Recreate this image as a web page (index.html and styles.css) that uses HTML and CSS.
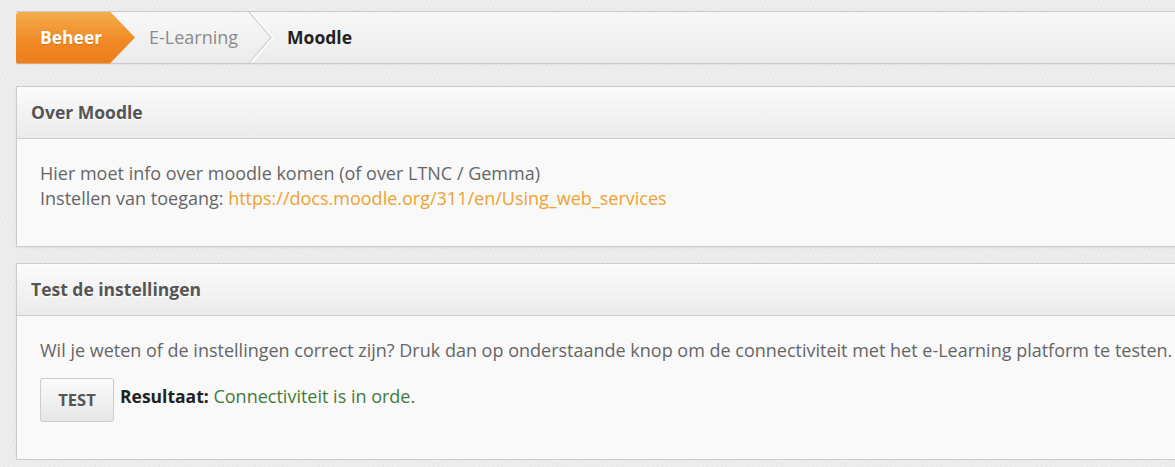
FILE: index.html
```html
<!DOCTYPE html>
<html lang="nl">
<head>
<meta charset="utf-8">
<title>Moodle</title>
<link rel="stylesheet" href="styles.css">
</head>
<body>
<div class="page">
  <nav class="crumbs">
    <a class="crumb crumb-home" href="#">Beheer</a>
    <a class="crumb crumb-mid" href="#">E-Learning</a>
    <svg class="sep" width="26" height="51" viewBox="0 0 26 51" aria-hidden="true">
      <polyline points="2,0 24,25.5 2,51" fill="none" stroke="#fdfdfd" stroke-width="3"/>
      <polyline points="1,0 23,25.5 1,51" fill="none" stroke="#cfcfcf" stroke-width="1.2"/>
    </svg>
    <span class="crumb crumb-current">Moodle</span>
  </nav>

  <section class="panel">
    <header class="panel-head"><h2>Over Moodle</h2></header>
    <div class="panel-body">
      <p>Hier moet info over moodle komen (of over LTNC / Gemma)<br>
      Instellen van toegang: <a class="link" href="#">https://docs.moodle.org/311/en/Using_web_services</a></p>
    </div>
  </section>

  <section class="panel">
    <header class="panel-head"><h2>Test de instellingen</h2></header>
    <div class="panel-body">
      <p>Wil je weten of de instellingen correct zijn? Druk dan op onderstaande knop om de connectiviteit met het e-Learning platform te testen.</p>
      <div class="test-row">
        <button class="btn" type="button">Test</button>
        <span class="result"><b>Resultaat:</b> <span class="ok">Connectiviteit is in orde.</span></span>
      </div>
    </div>
  </section>
</div>
</body>
</html>
```

FILE: styles.css
```css
html, body {
  margin: 0;
  padding: 0;
  overflow: hidden;
}
body {
  background-color: #ececec;
  background-image:
    repeating-linear-gradient(37deg, rgba(255,255,255,0.18) 0 1px, transparent 1px 3px),
    repeating-linear-gradient(-61deg, rgba(0,0,0,0.015) 0 1px, transparent 1px 4px);
  font-family: "Open Sans", "Liberation Sans", sans-serif;
  font-size: 18px;
  line-height: 25px;
  color: #666;
}
.page {
  padding: 11px 0 0 16px;
  width: 1200px;
}
.crumbs {
  display: flex;
  align-items: center;
  height: 51px;
  border-top: 1px solid #c9c9c9;
  border-bottom: 1px solid #c9c9c9;
  background: linear-gradient(#f8f8f8, #ebebeb);
  box-shadow: 0 1px 1px rgba(0,0,0,0.04);
}
.crumb {
  text-decoration: none;
  white-space: nowrap;
  line-height: 24px;
}
.crumb-home {
  box-sizing: border-box;
  width: 119px;
  height: 52px;
  margin-top: -1px;
  margin-bottom: -1px;
  padding-left: 24px;
  padding-bottom: 2px;
  display: flex;
  align-items: center;
  color: #fff;
  font-size: 17.5px;
  font-weight: bold;
  text-shadow: 0 1px 1px rgba(160,80,0,0.35);
  background: linear-gradient(#f6ac4d, #ef8a26 55%, #ee7d1b);
  border-radius: 3px 0 0 3px;
  clip-path: polygon(0 0, 94px 0, 119px 50%, 94px 100%, 0 100%);
}
.crumb-mid {
  margin-left: 14px;
  margin-bottom: 2px;
  color: #8a8a8a;
}
.sep {
  display: block;
  margin-left: 10px;
}
.crumb-current {
  margin-left: 13px;
  margin-bottom: 2px;
  color: #222;
  font-size: 17.5px;
  font-weight: bold;
}
.panel {
  margin-top: 22px;
  border: 1px solid #cbcbcb;
  border-right: none;
  background: #f9f9f9;
  box-shadow: 0 1px 2px rgba(0,0,0,0.06);
}
.panel + .panel {
  margin-top: 16px;
}
.panel-head {
  height: 51px;
  display: flex;
  align-items: center;
  padding-left: 14px;
  border-bottom: 1px solid #cbcbcb;
  background: linear-gradient(#fbfbfb, #ebebeb);
}
.panel-head h2 {
  margin: 0;
  font-size: 17.5px;
  font-weight: bold;
  color: #555;
  text-shadow: 0 1px 0 #fff;
}
.panel-body {
  padding: 22px 23px 25px;
}
.panel-body p {
  margin: 0 0 10px;
}
.link {
  color: #efa132;
  text-decoration: none;
}
.test-row {
  display: flex;
  align-items: center;
  gap: 6px;
  margin-top: 15px;
  margin-bottom: 12px;
}
.btn {
  width: 74px;
  height: 44px;
  padding: 0 0 2px;
  font-family: inherit;
  font-size: 16.5px;
  font-weight: bold;
  text-transform: uppercase;
  color: #555;
  background: linear-gradient(#fbfbfb, #e6e6e6);
  border: 1px solid #cccccc;
  border-radius: 3px;
}
.result {
  color: #222;
  margin-top: -8px;
}
.result b {
  font-weight: bold;
  font-size: 17.5px;
}
.ok {
  color: #3f7d3a;
}
```
